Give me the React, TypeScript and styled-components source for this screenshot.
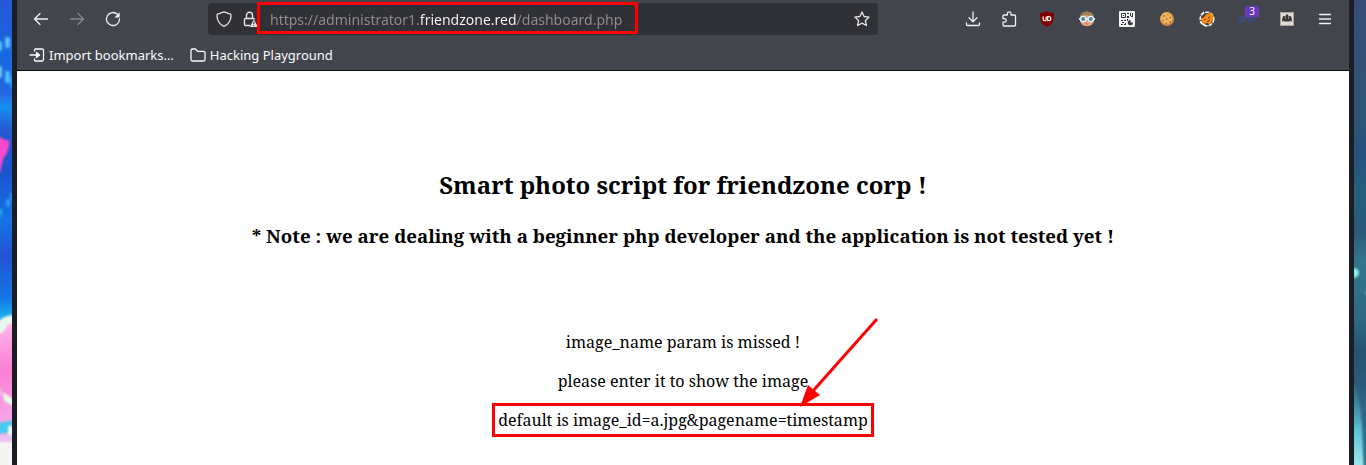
import React from "react";
import styled, { createGlobalStyle } from "styled-components";

const GlobalStyle = createGlobalStyle`
  * { box-sizing: border-box; }
  body { margin: 0; background: #1a1d24; }
`;

const uiFont = `"Noto Sans", "Open Sans", sans-serif`;
const pageFont = `"Noto Serif", "Droid Serif", "DejaVu Serif Condensed", "DejaVu Serif", serif`;

const Desktop = styled.div`
  display: flex;
  min-height: 100vh;
`;

const Wallpaper = styled.div`
  flex: 0 0 12px;
  display: flex;
  overflow: hidden;
  svg { width: 12px; height: 100%; min-height: 100vh; display: block; }
`;

const BrowserWindow = styled.div`
  flex: 1;
  min-width: 0;
  display: flex;
  flex-direction: column;
  border: solid #1a1d24;
  border-width: 0 5px;
`;

const Chrome = styled.header`
  background: #43454d;
  border-bottom: 1px solid #0c0c0e;
  font-family: ${uiFont};
  color: #fbfbfe;
`;

const NavBar = styled.nav`
  display: flex;
  align-items: center;
  height: 38px;
  padding: 0 6px;
`;

const ToolButton = styled.button<{ $wide?: boolean; $dim?: boolean }>`
  flex: none;
  position: relative;
  width: ${(p) => (p.$wide ? 40 : 36)}px;
  height: 32px;
  padding: 0;
  border: 0;
  background: none;
  color: ${(p) => (p.$dim ? "#85868b" : "#f0f0f3")};
  display: flex;
  align-items: center;
  justify-content: center;
`;

const Spacer = styled.div`
  flex: 0 1 77px;
`;

const UrlBar = styled.div`
  flex: 1;
  min-width: 0;
  height: 32px;
  display: flex;
  align-items: center;
  position: relative;
  background: #303136;
  border-radius: 4px;
`;

const UrlButton = styled.button<{ $width: number }>`
  flex: 0 0 ${(p) => p.$width}px;
  height: 32px;
  padding: 0;
  border: 0;
  background: none;
  color: #e4e4e7;
  display: flex;
  align-items: center;
  justify-content: center;
`;

/* The host name is brighter than the rest of the address. */
const UrlInput = styled.input`
  flex: 1;
  min-width: 0;
  height: 32px;
  margin-left: 10px;
  padding: 0;
  border: 0;
  outline: 0;
  font: 14px/20px ${uiFont};
  color: #8d8e92;
  -webkit-text-fill-color: transparent;
  background: linear-gradient(90deg, #8d8e92 150px, #fbfbfe 150px, #fbfbfe 246px, #8d8e92 246px);
  -webkit-background-clip: text;
  background-clip: text;
`;

const UrlHighlight = styled.div`
  position: absolute;
  left: 49px;
  top: -1px;
  width: 381px;
  height: 32px;
  border: 3px solid #fe0000;
  pointer-events: none;
`;

const BookmarksBar = styled.div`
  display: flex;
  align-items: center;
  gap: 16px;
  height: 32px;
  padding: 2px 12px 0;
`;

const Bookmark = styled.button`
  display: flex;
  align-items: center;
  gap: 4px;
  padding: 0;
  border: 0;
  background: none;
  color: inherit;
  font: 13px/20px ${uiFont};
  white-space: nowrap;
`;

const Badge = styled.span`
  position: absolute;
  top: 3px;
  right: 8px;
  width: 14px;
  height: 11px;
  border-radius: 1px;
  background: #6a37bd;
  color: #fff;
  font: 10px/11px ${uiFont};
  text-align: center;
`;

const Page = styled.main`
  flex: 1;
  background: #fff;
  color: #000;
  padding: 97px 8px 0;
  text-align: center;
  font: 16px/22px ${pageFont};
`;

const Title = styled.h2`
  margin: 0 0 22px;
  font-size: 24px;
  line-height: 33px;
`;

const Note = styled.h3`
  margin: 0 0 82px;
  line-height: 26px;
`;

const Message = styled.p`
  margin: 0 0 17px;
`;

const Marked = styled.span`
  position: relative;
  display: inline-block;
  outline: 3px solid #fe0000;
  outline-offset: 3px;
`;

const Arrow = styled.svg`
  position: absolute;
  right: -16px;
  bottom: 22px;
  width: 90px;
  height: 96px;
  pointer-events: none;
`;

type DrawingProps = { children: React.ReactNode };
const Line = ({ children }: DrawingProps) => (
  <svg width="16" height="16" viewBox="0 0 16 16" fill="none" stroke="currentColor" strokeWidth="1.3" strokeLinecap="round" strokeLinejoin="round" aria-hidden="true">
    {children}
  </svg>
);
const Art = ({ children }: DrawingProps) => (
  <svg width="16" height="16" viewBox="0 0 16 16" aria-hidden="true">{children}</svg>
);

const LeftScene = () => (
  <svg viewBox="0 0 12 465" preserveAspectRatio="none" aria-hidden="true">
    <defs>
      <linearGradient id="sky" x2="0" y2="1">
        <stop offset="0" stopColor="#2557d3" /><stop offset=".12" stopColor="#1769e0" />
        <stop offset=".2" stopColor="#2466df" /><stop offset=".23" stopColor="#148ff0" />
        <stop offset=".28" stopColor="#2459cf" /><stop offset=".37" stopColor="#1b52cc" />
        <stop offset=".47" stopColor="#1474e5" /><stop offset=".55" stopColor="#2154cf" />
        <stop offset=".64" stopColor="#1276e6" /><stop offset=".69" stopColor="#20b9ee" />
      </linearGradient>
      <linearGradient id="petal" x2="0" y2="1">
        <stop offset="0" stopColor="#ffb5ec" /><stop offset=".4" stopColor="#fc80d4" />
        <stop offset="1" stopColor="#f2b4ef" />
      </linearGradient>
      <filter id="soft" filterUnits="userSpaceOnUse" x="-6" y="0" width="24" height="480" colorInterpolationFilters="sRGB"><feGaussianBlur stdDeviation=".9" /></filter>
    </defs>
    <path d="M0 0h12v465H0z" fill="url(#sky)" />
    <g filter="url(#soft)">
      <rect x="5" y="37" width="5" height="11" rx="2" fill="#61bdf8" />
      <rect x="-2" y="41" width="4" height="10" rx="2" fill="#52c7fb" />
      <rect x="5" y="71" width="5" height="12" rx="2" fill="#4cbcfa" />
      <rect x="-2" y="66" width="4" height="12" rx="2" fill="#6dc6f8" />
      <rect x="10" y="77" width="3" height="10" fill="#2a9df4" />
      <path d="M-3 137h3l5 3 4 0v7l-3 8-3 4-3 14h-3z" fill="#fb49cf" />
      <path d="M0 208l2 3-2 8z" fill="#23d6f4" />
      <ellipse cx="8" cy="203" rx="2" ry="4" fill="#2d9df2" />
      <ellipse cx="11" cy="197" rx="1" ry="5" fill="#279bf1" />
      <path d="M-3 320h3q6-5 15-5v30H-3z" fill="#e9f8ef" />
      <path d="M-3 334h3l6-5 2-5h7v115H-3z" fill="url(#petal)" />
      <path d="M0 388l1 1v8l-1-2zM3 392l4 3 8 5v7l-11-6z" fill="#e9fbe9" />
      <path d="M-3 423l18-3v12l-18 2z" fill="#45cbed" />
      <rect x="8" y="426" width="8" height="9" fill="#e9fcf3" />
      <path d="M-3 434l18 2v8l-18-1z" fill="#eec0ef" />
      <path d="M-3 442h18v35H-3z" fill="#f6f4f3" />
    </g>
  </svg>
);

const RightScene = () => (
  <svg viewBox="0 0 12 465" preserveAspectRatio="none" aria-hidden="true">
    <defs>
      <linearGradient id="dusk" x2="0" y2="1">
        <stop offset="0" stopColor="#374c76" /><stop offset=".25" stopColor="#2e5673" />
        <stop offset=".33" stopColor="#255080" /><stop offset=".41" stopColor="#245f7c" />
        <stop offset=".5" stopColor="#2a5a78" /><stop offset=".56" stopColor="#34758a" />
        <stop offset=".68" stopColor="#2d6a82" /><stop offset=".76" stopColor="#25526e" />
        <stop offset=".88" stopColor="#2f6585" /><stop offset="1" stopColor="#31728f" />
      </linearGradient>
      <linearGradient id="beam" x2="0" y2="1">
        <stop offset="0" stopColor="#4199b4" stopOpacity=".2" /><stop offset=".5" stopColor="#5bc4d8" />
        <stop offset="1" stopColor="#b6f1f1" />
      </linearGradient>
      <filter id="haze" filterUnits="userSpaceOnUse" x="-6" y="0" width="24" height="480" colorInterpolationFilters="sRGB"><feGaussianBlur stdDeviation=".8" /></filter>
    </defs>
    <path d="M0 0h12v465H0z" fill="url(#dusk)" />
    <g filter="url(#haze)">
      <ellipse cx="0" cy="273" rx="5" ry="5" fill="#87f0e7" />
      <circle cx="12" cy="293" r="1.5" fill="#4fa4ab" />
      <path d="M-3 385h3q6 10 8 42l2 50H-3z" fill="url(#beam)" />
    </g>
  </svg>
);

export default function App() {
  return (
    <>
      <GlobalStyle />
      <Desktop>
        <Wallpaper><LeftScene /></Wallpaper>
        <BrowserWindow>
          <Chrome>
            <NavBar aria-label="Browser toolbar">
              <ToolButton aria-label="Back"><Line><path d="M14.5 8H1.5M7 2.5L1.5 8 7 13.5" /></Line></ToolButton>
              <ToolButton aria-label="Forward" $dim><Line><path d="M1.5 8h13M9 2.5L14.5 8 9 13.5" /></Line></ToolButton>
              <ToolButton aria-label="Reload">
                <Line><path d="M12.6 3.4A6.5 6.5 0 1 0 14.5 8" /><path d="M14.6 1.2v5.2H9.4z" fill="currentColor" stroke="none" /></Line>
              </ToolButton>
              <Spacer />
              <UrlBar>
                <UrlButton $width={32} aria-label="Tracking protection">
                  <Line><path d="M8 .9l6.3 2.3c.5.2.7.5.7 1 0 4.9-1.8 8.8-7 11.2C2.8 13 1 9.1 1 4.2c0-.5.2-.8.7-1z" /></Line>
                </UrlButton>
                <UrlButton $width={20} aria-label="Connection not secure">
                  <svg width="16" height="16" viewBox="0 0 16 16" fill="none" stroke="currentColor" strokeWidth="1.4" aria-hidden="true">
                    <path d="M8 14.5H3.5a1 1 0 0 1-1-1V8.5a1 1 0 0 1 1-1h8a1 1 0 0 1 1 1M4.500 7.500V4.300a3 3 0 0 1 6 0v3.200" />
                    <path d="M11.8 8.3L16 16H7.8z" fill="currentColor" stroke="none" />
                    <path d="M11.8 10.500v2.600M11.800 14v1" stroke="#303136" strokeWidth="1" />
                  </svg>
                </UrlButton>
                <UrlInput aria-label="Address" defaultValue="https://administrator1.friendzone.red/dashboard.php" />
                <UrlButton $width={32} aria-label="Bookmark this page">
                  <Line><path d="M8 .9l2.1 4.6 5 .6-3.7 3.4 1 5L8 12.1l-4.400 2.400 1-5L.9 6.100l5-.6z" /></Line>
                </UrlButton>
                <UrlHighlight />
              </UrlBar>
              <Spacer />
              <ToolButton aria-label="Downloads"><Line><path d="M8 1v9.500M4 6.800l4 4 4-4M1.500 12v1.500a1 1 0 0 0 1 1h11a1 1 0 0 0 1-1V12" /></Line></ToolButton>
              <ToolButton aria-label="Extensions">
                <Line><path d="M2 6V5a1 1 0 0 1 1-1h3.400V2.600a1.800 1.800 0 0 1 3.600 0V4h3.500a1 1 0 0 1 1 1v9a1 1 0 0 1-1 1H3a1 1 0 0 1-1-1v-2.800h1.500a1.700 1.700 0 0 0 0-3.500H2z" /></Line>
              </ToolButton>
              <ToolButton $wide aria-label="Content blocker">
                <Art>
                  <path d="M8 0c2 1.300 4 2 7 2 0 7-.3 10.500-7 14C1.300 12.500 1 9 1 2c3 0 5-.7 7-2z" fill="#800000" />
                  <path d="M4.200 5.500v2.700a1.500 1.500 0 0 0 3 0V5.500M8.700 5.500v4.200h1a2.100 2.100 0 0 0 0-4.200z" fill="none" stroke="#fff" strokeWidth="1.200" />
                </Art>
              </ToolButton>
              <ToolButton $wide aria-label="User agent">
                <Art>
                  <circle cx="8" cy="8" r="7.300" fill="#e5a586" />
                  <path d="M1 7C1 3 4 .6 8 .6S15 3 15 7l-3-2-7-1z" fill="#9c8058" />
                  <path d="M0 7h16v2H0z" fill="#d9e7eb" />
                  <circle cx="4.200" cy="8" r="2.700" fill="#59899b" stroke="#e7f3f5" strokeWidth="1.200" />
                  <circle cx="11.800" cy="8" r="2.700" fill="#59899b" stroke="#e7f3f5" strokeWidth="1.200" />
                  <path d="M6 12.500h4l-2 1.300z" fill="#d35b50" />
                </Art>
              </ToolButton>
              <ToolButton $wide aria-label="QR code">
                <Art>
                  <rect width="16" height="16" rx="1" fill="#f5f5f5" />
                  <path d="M2.500 2.500h4v4h-4z" fill="none" stroke="#34363c" />
                  <path d="M4 4h1v1H4zM8 2h2v1H8zM8 5h2v2H8zM11 2h1v3h-1zM13 2h1v4h-2V5h1zM2 9h2v1H2zM5 9h2v1H5zM3 11h2v1H3zM2 13h2v1H2zM6 12h1v2H5v-1h1zM8 8h1v2H8z" fill="#34363c" />
                  <path d="M11.500 9v2.500H14A2.600 2.600 0 1 1 11.500 9z" fill="#34363c" />
                </Art>
              </ToolButton>
              <ToolButton $wide aria-label="Cookie editor">
                <Art>
                  <circle cx="8" cy="8" r="7" fill="#d08a3a" />
                  <circle cx="7.500" cy="7.300" r="6" fill="#f0b25c" />
                  <g fill="#805027"><circle cx="5" cy="5" r=".8" /><circle cx="9" cy="3.500" r=".6" /><circle cx="11.500" cy="6.500" r=".8" /><circle cx="7.800" cy="8" r=".8" /><circle cx="4" cy="9.500" r=".7" /><circle cx="7" cy="12.500" r=".7" /><circle cx="11" cy="11" r=".8" /></g>
                </Art>
              </ToolButton>
              <ToolButton $wide aria-label="Proxy switcher">
                <Art>
                  <circle cx="8" cy="8" r="6.800" fill="#3b3936" stroke="#f5f2e9" strokeWidth="1.600" strokeDasharray="4 1" />
                  <path d="M1.500 7l2.500 0 3-3.500 5-2 2.500 3.500-1 5-3 3.500-2-1.500-4 1-2-3z" fill="#f58b13" />
                  <path d="M5 9l2-1M9 7l2-1M8 11l3-2" stroke="#693b10" strokeWidth="1" />
                  <path d="M2 4l3-3M1 11l3 2 3 2" stroke="#fff" strokeWidth="1.300" fill="none" />
                </Art>
              </ToolButton>
              <ToolButton $wide aria-label="Technology profiler">
                <svg width="18" height="16" viewBox="0 0 18 16" fill="none" stroke="#3d4c8c" strokeWidth="1.300" aria-hidden="true">
                  <path d="M1 12.500L2.500 6h2.700c1.600 0 1.300 4-.8 4H1.700M8 4l-1.300 6M7.400 6h2.300c1.200 0 .8 1.500.2 4M11.500 12.500L13 6h2.700c1.600 0 1.300 4-.8 4h-2.700" />
                </svg>
                <Badge>3</Badge>
              </ToolButton>
              <ToolButton $wide aria-label="Privacy helper">
                <Art>
                  <rect x="1.500" y="1.500" width="13" height="13" fill="#e0dbd7" stroke="#aaa39e" />
                  <path d="M6.500 5.500L7 3.500h2l.5 2 2.500-.5 1 4-.5 2-1.200-1.500L10 11l-1-1-1 1-1-1-1 1-1.300-1.500L3.500 11 3 9l1-4z" fill="#393735" />
                  <path d="M6 7h1M9 7h1" stroke="#e0dbd7" />
                </Art>
              </ToolButton>
              <ToolButton aria-label="Application menu"><Line><path d="M2.500 3.500h11M2.500 8h11M2.500 12.500h11" /></Line></ToolButton>
            </NavBar>
            <BookmarksBar>
              <Bookmark>
                <Line><path d="M5.500 4V3a1 1 0 0 1 1-1H13a1.500 1.500 0 0 1 1.500 1.500v9A1.500 1.500 0 0 1 13 14H6.500a1 1 0 0 1-1-1v-1M1 8h9" /><path d="M7.500 5.500L10.500 8l-3 2.500z" fill="currentColor" /></Line>
                Import bookmarks…
              </Bookmark>
              <Bookmark>
                <Line><path d="M1 12.500v-9A1.500 1.500 0 0 1 2.500 2h3l2 2.300h6A1.500 1.500 0 0 1 15 5.800v6.700a1.500 1.500 0 0 1-1.500 1.500h-11A1.500 1.500 0 0 1 1 12.500z" /></Line>
                Hacking Playground
              </Bookmark>
            </BookmarksBar>
          </Chrome>
          <Page>
            <Title>Smart photo script for friendzone corp !</Title>
            <Note>* Note : we are dealing with a beginner php developer and the application is not tested yet !</Note>
            <Message>image_name param is missed !</Message>
            <Message>please enter it to show the image</Message>
            <Message>
              <Marked>
                default is image_id=a.jpg&amp;pagename=timestamp
                <Arrow viewBox="0 0 90 96" aria-hidden="true">
                  <path d="M83 6L18 79" stroke="#fe0000" strokeWidth="3" />
                  <path d="M6 94L14 72 26 82z" fill="#fe0000" />
                </Arrow>
              </Marked>
            </Message>
          </Page>
        </BrowserWindow>
        <Wallpaper><RightScene /></Wallpaper>
      </Desktop>
    </>
  );
}
